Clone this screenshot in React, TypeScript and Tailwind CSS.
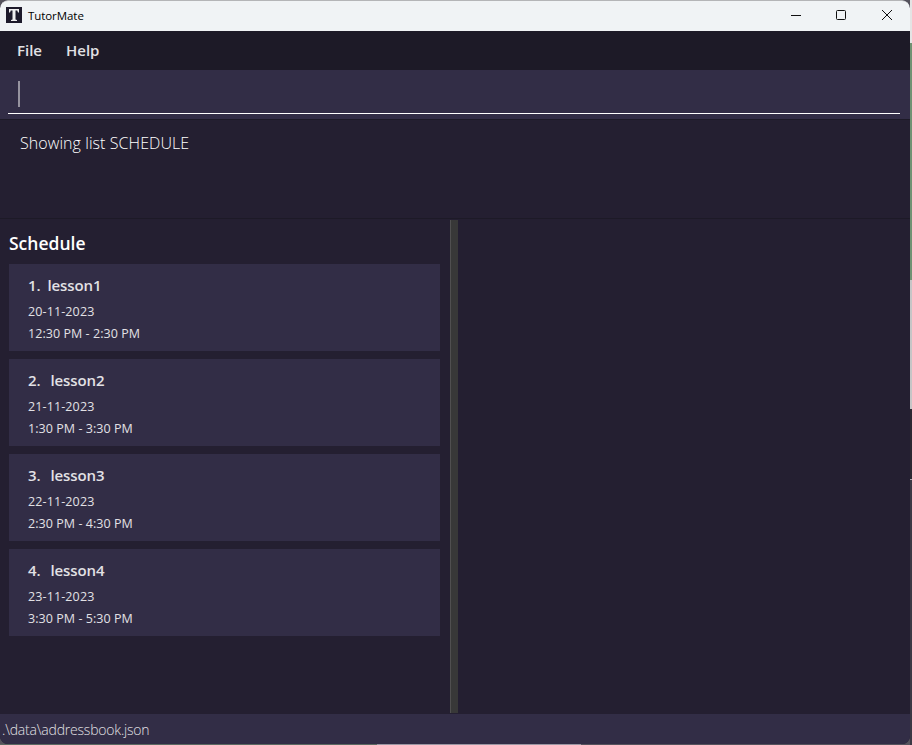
const lessons = [
  { id: 1, name: 'lesson1', date: '20-11-2023', time: '12:30 PM - 2:30 PM' },
  { id: 2, name: 'lesson2', date: '21-11-2023', time: '1:30 PM - 3:30 PM' },
  { id: 3, name: 'lesson3', date: '22-11-2023', time: '2:30 PM - 4:30 PM' },
  { id: 4, name: 'lesson4', date: '23-11-2023', time: '3:30 PM - 5:30 PM' },
];

function TitleBar() {
  return (
    <header className="flex h-[31px] shrink-0 items-center rounded-t-[8px] border-t border-[#b4b5b7] bg-[#f0f3f5] pl-1.5 text-black">
      <svg width="16" height="16" viewBox="0 0 16 16" className="-mt-0.5 shrink-0">
        <rect width="16" height="16" fill="#1d1a2b" />
        <path d="M3 2h10v3.600h-1L11.200 3.400H9.500v9.200l1.500.5v.9H5v-.9l1.500-.5V3.400H4.800L4 5.600H3z" fill="#f0f0f0" />
      </svg>
      <span className="ml-1.5 text-[11.5px] leading-4 tracking-[-0.07px]">TutorMate</span>
      <svg width="104" height="12" viewBox="0 0 104 12" className="mr-4 ml-auto -mt-0.5" fill="none" stroke="#101010">
        <path d="M1 6.500h10" />
        <rect x="46.500" y="1.500" width="9" height="9" rx="1" />
        <path d="M92 1l10 10M102 1L92 11" />
      </svg>
    </header>
  );
}

function LessonCard({ id, name, date, time }: (typeof lessons)[number]) {
  return (
    <li className="h-[87px] bg-[#322d46] pt-2.5 pl-[19px] text-[#e2e1e5]">
      <h2 className="flex h-[22px] text-[15px] leading-[22px] font-semibold tracking-[-0.1px]">
        <span className={id === 1 ? 'mr-[7px]' : 'mr-2.5'}>{id}.</span>
        <span>{name}</span>
      </h2>
      <p className="mt-[5px] h-[22px] text-[12.5px] leading-[22px] tracking-[0.12px]">{date}</p>
      <p className="h-[22px] text-[12.5px] leading-[22px] tracking-[0.05px]">{time}</p>
    </li>
  );
}

export default function App() {
  return (
    <div className="flex h-[745px] w-[912px] overflow-hidden bg-[#55535d] font-['Open_Sans','Noto_Sans',sans-serif]">
      <div className="flex w-[910px] flex-col">
        <div className="flex h-[744px] w-[910px] flex-col overflow-hidden rounded-[8px] bg-[#241f31]">
          <TitleBar />
          <nav className="flex h-[39px] shrink-0 items-center gap-6 bg-[#1d1a27] pl-[17px] text-[15px] font-semibold text-[#e2e1e5]">
            <span>File</span>
            <span>Help</span>
          </nav>
          <div className="h-[50px] shrink-0 border-b border-[#1d1a27] bg-[#322d46] px-2">
            <div className="mr-[2px] flex h-[44px] items-center border-b border-white pt-1 pl-[10px]">
              <span className="h-[26px] w-[2px] bg-[#96939f]" />
            </div>
          </div>
          <div className="h-[99px] shrink-0 border-b border-[#1d1a27] pt-[11px] pl-5 text-[16px] leading-6 font-light tracking-[0.07px] text-white">
            Showing list SCHEDULE
          </div>
          <main className="flex min-h-0 flex-1 pt-px pb-px">
            <section className="w-[450px] pt-[9px] pr-[10px] pl-[9px]">
              <h1 className="h-[35px] text-[17.5px] leading-[28px] font-semibold text-white">Schedule</h1>
              <ul className="flex flex-col gap-2">
                {lessons.map((l) => (
                  <LessonCard key={l.id} {...l} />
                ))}
              </ul>
            </section>
            <div className="w-2 border-l border-[#504f50] bg-[#383838]" />
            <section className="flex-1" />
          </main>
          <footer className="h-[30px] shrink-0 bg-[#322d46] pl-[2px] text-[14px] leading-[31px] font-light tracking-[-0.2px] text-[#e2e1e5]">
            .\data\addressbook.json
          </footer>
        </div>
        <div className="flex h-px">
          <span className="w-[377px] bg-[#5b6962]" />
          <span className="w-[204px] bg-[#9b97a3]" />
          <span className="flex-1 bg-[#55535d]" />
        </div>
      </div>
      <div className="flex w-[2px] flex-col">
        <span className="h-[43px] bg-[#e4e4e4]" />
        <span className="h-[237px] bg-[#719273]" />
        <span className="h-[129px] bg-[#c6c5c6]" />
        <span className="h-[70px] bg-[#2c2933]" />
        <span className="h-px bg-[#aaa8b0]" />
        <span className="flex-1 bg-[#3b3844]" />
      </div>
    </div>
  );
}
